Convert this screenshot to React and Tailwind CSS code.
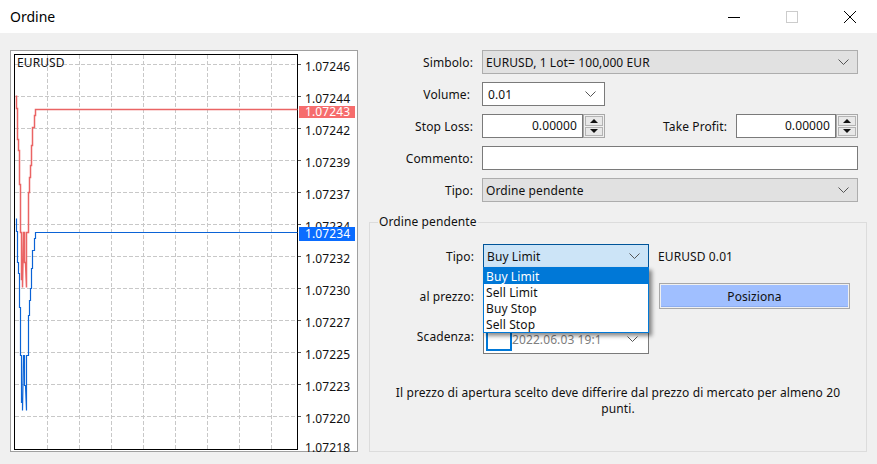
import React from "react";

const prices = ["1.07246", "1.07244", "1.07242", "1.07239", "1.07237", "1.07234", "1.07232", "1.07230", "1.07227", "1.07225", "1.07223", "1.07220"];
const gridX = [47, 79, 111, 143, 175, 207, 239, 271];
const gridY = [64, 96, 128, 160, 192, 224, 256, 288, 320, 352, 384, 416];
// andamento del prezzo: stessa forma per ask e bid, solo spostata in verticale
const drop = [[16, 95], [16, 108], [17, 108], [17, 139], [18, 139], [18, 150], [19, 150], [19, 184], [20, 184], [20, 232], [21, 232], [21, 279], [22, 279], [22, 287], [23, 232], [24, 232], [24, 262], [25, 262], [26, 287], [26, 232], [27, 232], [28, 232], [28, 192], [29, 192], [29, 177], [30, 177], [30, 165], [31, 165], [31, 145], [32, 145], [32, 127], [34, 127], [34, 115], [35, 115], [35, 109], [36, 109], [297, 109]];

const toLine = (off) => drop.map(([x, y]) => `${x - 13.5},${y + off - 53.5}`).join(" ");

const Chevron = ({ color = "#555" }) => (
  <svg width="11" height="6" viewBox="0 0 11 6" fill="none" stroke={color} strokeWidth="1">
    <path d="M0.5 0.5 L5.5 5.5 L10.5 0.5" />
  </svg>
);

const Select = ({ value, className }) => (
  <div className={`flex h-6 items-center justify-between pr-[8px] ${className}`}>
    <span className="pt-px">{value}</span>
    <Chevron />
  </div>
);

const Spin = () => (
  <div className="flex h-6 w-[22px] flex-col gap-px border border-[#a8a8a8] bg-[#f0f0f0] p-px">
    <div className="flex flex-1 items-center justify-center border border-[#b4b4b4] bg-[#e8e8e8]">
      <svg width="8" height="4" viewBox="0 0 8 4"><path d="M4 0 L8 4 L0 4 Z" fill="#111" /></svg>
    </div>
    <div className="flex flex-1 items-center justify-center border border-[#b4b4b4] bg-[#e8e8e8]">
      <svg width="8" height="4" viewBox="0 0 8 4"><path d="M4 4 L8 0 L0 0 Z" fill="#111" /></svg>
    </div>
  </div>
);

const Row = ({ label, pr = "pr-0", children }) => (
  <div className="flex h-6 items-center">
    <div className={`w-[104px] pt-px text-right ${pr}`}>{label}</div>
    <div className="ml-[9px] flex flex-1 items-center">{children}</div>
  </div>
);

const Chart = () => (
  <div className="relative h-[402px] w-[348px] shrink-0 border border-[#a0a0a0] bg-white">
    <div className="flex h-full pl-[3px] pt-[3px]">
      <div className="relative h-[396px] w-[284px] shrink-0 border border-black">
        <svg className="absolute -left-px -top-px overflow-visible" width="284" height="396" fill="none">
          {gridX.map((x) => (
            <line key={x} x1={x - 13.5} x2={x - 13.5} y1="1" y2="395" stroke="#c8c8c8" strokeDasharray="4 2" />
          ))}
          {gridY.map((y) => (
            <line key={y} x1="1" x2="283" y1={y - 53.5} y2={y - 53.5} stroke="#c8c8c8" strokeDasharray="4 2" />
          ))}
          {gridY.map((y) => (
            <line key={y} x1="284" x2="287" y1={y - 53.5} y2={y - 53.5} stroke="#555" />
          ))}
          <polyline points={toLine(0)} stroke="#ea6464" strokeWidth="1.5" />
          <polyline points={toLine(123)} stroke="#0b63d6" strokeWidth="1.2" />
        </svg>
        <span className="absolute left-[2px] top-0 leading-[16px]">EURUSD</span>
      </div>
      <div className="ml-[7px] flex flex-col pt-[5px]">
        {prices.map((p) => (
          <div key={p} className="h-8 shrink-0 leading-[16px]">{p}</div>
        ))}
        <div className="-mt-[3px] shrink-0 leading-[16px]">1.07218</div>
      </div>
    </div>
    <div className="absolute left-[288px] top-[55px] h-3 w-[56px] bg-[#f66d6d] pl-[6px] leading-[12px] text-white">1.07243</div>
    <div className="absolute left-[288px] top-[176px] h-[14px] w-[56px] bg-[#0a6cff] pl-[6px] leading-[14px] text-white">1.07234</div>
  </div>
);

const App = () => {
  return (
    <div className="flex h-[464px] w-[877px] flex-col overflow-hidden bg-[#f0f0f0] text-[12px] tracking-[0.1px] text-[#111] font-['Noto_Sans',sans-serif]">
      <div className="flex h-[33px] shrink-0 items-center justify-between bg-white pl-[10px] pr-[21px]">
        <span className="text-[14px] tracking-normal text-black">Ordine</span>
        <div className="flex items-center gap-[46px]">
          <svg width="12" height="12" viewBox="0 0 12 12" stroke="#000"><path d="M0 6.5 H12" /></svg>
          <svg width="12" height="12" viewBox="0 0 12 12" fill="none" stroke="#ccc"><rect x="0.5" y="0.5" width="11" height="11" /></svg>
          <svg width="12" height="12" viewBox="0 0 12 12" stroke="#000"><path d="M0 0 L12 12 M12 0 L0 12" /></svg>
        </div>
      </div>

      <div className="flex flex-1 pl-[10px] pt-[17px]">
        <Chart />
        <div className="ml-[11px] w-[498px]">
          <div className="flex flex-col gap-2 pr-[9px]">
            <Row label="Simbolo:">
              <Select value="EURUSD, 1 Lot= 100,000 EUR" className="w-full border border-[#adadad] bg-[#e1e1e1] pl-[3px]" />
            </Row>
            <Row label="Volume:" pr="pr-[3px]">
              <Select value="0.01" className="w-[123px] border border-[#7a7a7a] bg-white pl-[5px]" />
            </Row>
            <Row label="Stop Loss:">
              <div className="h-6 w-[101px] border border-[#7a7a7a] bg-white pr-[5px] text-right leading-[22px]">0.00000</div>
              <Spin />
              <div className="w-[122px] pt-px text-right">Take Profit:</div>
              <div className="ml-[9px] h-6 w-[100px] border border-[#7a7a7a] bg-white pr-[5px] text-right leading-[22px]">0.00000</div>
              <Spin />
            </Row>
            <Row label="Commento:">
              <div className="h-6 w-full border border-[#7a7a7a] bg-white" />
            </Row>
            <Row label="Tipo:">
              <Select value="Ordine pendente" className="w-full border border-[#adadad] bg-[#e1e1e1] pl-[3px]" />
            </Row>
          </div>

          <div className="relative mt-[20px] h-[230px] border border-[#dcdcdc]">
            <span className="absolute -top-[9px] left-[8px] bg-[#f0f0f0] px-px leading-[16px]">Ordine pendente</span>

            <div className="flex flex-col pt-[21px]">
              <div className="flex h-6 items-center">
                <div className="w-[104px] pt-px text-right">Tipo:</div>
                <div className="ml-[9px] w-[166px]">
                  <Select value="Buy Limit" className="border border-[#005499] bg-[#cce4f7] pl-[3px]" />
                </div>
                <span className="ml-[9px] pt-px">EURUSD 0.01</span>
              </div>

              <div className="mt-[15px] flex h-[26px] items-center">
                <div className="w-[104px] pt-px text-right">al prezzo:</div>
                <div className="ml-[185px] flex h-[26px] w-[191px] border border-[#a8a8a8] p-px">
                  <div className="flex-1 border-b border-[#8eaef0] bg-[#a0bfff] text-center leading-[23px]">Posiziona</div>
                </div>
              </div>

              <div className="mt-[9px] flex h-[26px] items-center">
                <div className="w-[104px] pt-[11px] text-right">Scadenza:</div>
                <div className="relative ml-[9px] -mt-[1px] h-[37px] w-[166px] self-start border border-[#7a7a7a] bg-white">
                  <div className="flex h-full items-end justify-between pb-[4px] pl-[28px] pr-[10px] text-[#808080]">
                    <span>2022.06.03 19:1</span>
                    <div className="mb-[7px]"><Chevron /></div>
                  </div>
                  <div className="absolute bottom-[2px] left-[2px] h-[26px] w-[26px] border-2 border-[#0078d7]" />
                </div>
              </div>
            </div>

            <p className="mx-auto mt-[41px] w-[460px] text-center leading-[16px]">
              Il prezzo di apertura scelto deve differire dal prezzo di mercato per almeno 20 punti.
            </p>

            {/* lista aperta del tipo */}
            <div className="absolute left-[113px] top-[44px] w-[166px] border border-[#0078d7] bg-white shadow-[3px_3px_4px_rgba(0,0,0,0.45)]">
              <div className="h-4 bg-[#0078d7] pl-[2px] leading-[18px] text-white">Buy Limit</div>
              <div className="h-4 pl-[2px] leading-[18px]">Sell Limit</div>
              <div className="h-4 pl-[2px] leading-[18px]">Buy Stop</div>
              <div className="h-4 pl-[2px] leading-[18px]">Sell Stop</div>
            </div>
          </div>
        </div>
      </div>
    </div>
  );
};

export default App;
